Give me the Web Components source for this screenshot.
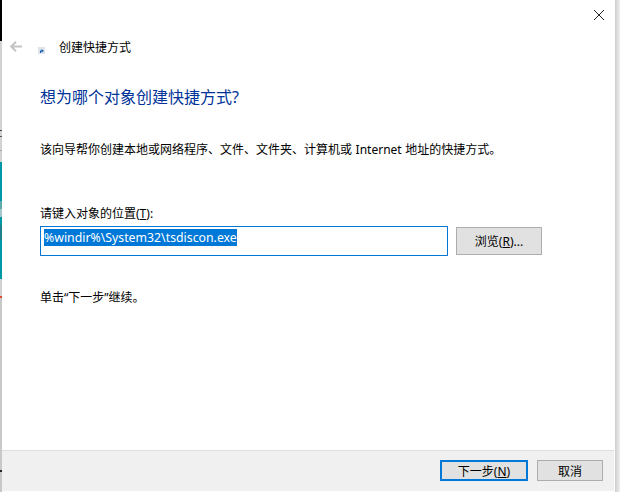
<!DOCTYPE html>
<html>
<head>
<meta charset="utf-8">
<style>
html, body { margin: 0; height: 100%; background: #fff; overflow: hidden; }
</style>
</head>
<body>
<wizard-window>
    <wizard-header slot="header">创建快捷方式</wizard-header>
    <wizard-page>
        <span slot="title">想为哪个对象创建快捷方式?</span>
        <span slot="intro">该向导帮你创建本地或网络程序、文件、文件夹、计算机或 Internet 地址的快捷方式。</span>
        <location-field></location-field>
        <span slot="hint">单击“下一步”继续。</span>
    </wizard-page>
    <wizard-button slot="footer" primary style="width:88px"><span>下一步(<u>N</u>)</span></wizard-button>
    <wizard-button slot="footer" style="width:66px"><span>取消</span></wizard-button>
</wizard-window>
<script>
class BaseElement extends HTMLElement {
    constructor() {
        super();
        this.attachShadow({ mode: 'open' });
    }

    connectedCallback() {
        this.shadowRoot.innerHTML = `<style>${this.constructor.styles}</style>${this.render()}`;
    }
}

class WizardWindow extends BaseElement {
    static get styles() {
        return `
        :host {
            display: grid;
            grid-template-columns: 2px 1fr 6px;
            height: 492px;
            font-family: "Noto Sans", "Noto Sans CJK SC", sans-serif;
            font-size: 12px;
            color: #000;
        }
        .edge {
            background: linear-gradient(to bottom,
                #000 0, #000 41px, #d2d2d2 41px, #d2d2d2 130px,
                #444 130px, #444 131px, #d2d2d2 131px, #d2d2d2 136px,
                #555 136px, #555 137px, #d2d2d2 137px, #d2d2d2 150px,
                #aaa 150px, #aaa 151px, #d2d2d2 151px, #d2d2d2 162px,
                #0097a7 162px, #0097a7 201px, #5fa8ac 201px, #5fa8ac 209px,
                #a4c8ca 209px, #a4c8ca 217px, #0097a7 217px, #0097a7 225px,
                #1f7f8c 225px, #1f7f8c 240px, #0097a7 240px, #0097a7 279px,
                #d2d2d2 279px, #d2d2d2 296px, #e5482d 296px, #e5482d 298px,
                #c8c8c8 298px, #c8c8c8 470px, #222 470px, #222 472px, #c8c8c8 472px);
        }
        .side { background: linear-gradient(to right, #fff 0, #fff 1px, #cdcdcd 1px, #efefef 6px); }
        main { display: flex; flex-direction: column; min-width: 0; }
        .body { flex: 1; display: flex; flex-direction: column; }
        footer {
            display: flex;
            justify-content: flex-end;
            gap: 9px;
            height: 41px;
            margin-bottom: 1px;
            box-sizing: border-box;
            padding: 9px 11px 0 0;
            background: #f0f0f0;
            border-top: 1px solid #dfdfdf;
        }
        `;
    }

    render() {
        return `
        <div class="edge"></div>
        <main>
            <div class="body"><slot name="header"></slot><slot></slot></div>
            <footer><slot name="footer"></slot></footer>
        </main>
        <div class="side"></div>`;
    }
}

class WizardHeader extends BaseElement {
    static get styles() {
        return `
        :host { display: block; }
        .bar { display: flex; justify-content: flex-end; height: 28px; box-sizing: border-box; padding: 9px 9px 0 0; }
        .row { display: flex; align-items: center; height: 38px; padding-left: 8px; }
        svg { display: block; flex: none; }
        .back { margin: -2px 16px 0 0; }
        .icon { margin: 6px 14px 0 0; }
        `;
    }

    render() {
        return `
        <div class="bar">
            <svg width="12" height="12" viewBox="0 0 12 12"><path d="M1 1l10 10M11 1 1 11" fill="none" stroke="#222" stroke-width="1"/></svg>
        </div>
        <div class="row">
            <svg class="back" width="12" height="11" viewBox="0 0 12 11"><path d="M6 .8 1.2 5.5 6 10.2M1.5 5.5H12" fill="none" stroke="#c4c4c4" stroke-width="2"/></svg>
            <svg class="icon" width="7" height="7" viewBox="0 0 7 7"><rect width="7" height="7" fill="#dfe3ea"/><path d="M2 6V3.5h1.5V2L6 4 3.5 5.5V4.5H3V6z" fill="#1b5fb4"/></svg>
            <slot></slot>
        </div>`;
    }
}

class WizardPage extends BaseElement {
    static get styles() {
        return `
        :host { display: flex; flex-direction: column; padding-left: 38px; }
        .title { margin-top: 18px; height: 26px; line-height: 26px; font-size: 16px; color: #003399; }
        .intro { margin-top: 30px; height: 20px; line-height: 20px; word-spacing: .5px; }
        .hint { margin-top: 32px; height: 20px; line-height: 20px; }
        `;
    }

    render() {
        return `
        <div class="title"><slot name="title"></slot></div>
        <div class="intro"><slot name="intro"></slot></div>
        <slot></slot>
        <div class="hint"><slot name="hint"></slot></div>`;
    }
}

class LocationField extends BaseElement {
    static get styles() {
        return `
        :host { display: block; margin-top: 44px; }
        label { display: block; height: 20px; line-height: 20px; }
        .row { display: flex; align-items: center; gap: 8px; margin-top: 2px; }
        .input {
            box-sizing: border-box;
            width: 408px;
            height: 30px;
            border: 1px solid #0078d7;
            padding: 2px 3px 0;
            display: flex;
            align-items: flex-start;
        }
        .sel {
            background: #0078d7;
            color: #fff;
            font-family: "Noto Sans", sans-serif;
            font-size: 12.3px;
            line-height: 17px;
            height: 17px;
        }
        `;
    }

    render() {
        return `
        <label>请键入对象的位置(<u>T</u>):</label>
        <div class="row">
            <div class="input"><span class="sel">%windir%\\System32\\tsdiscon.exe</span></div>
            <wizard-button style="width:86px;height:28px"><span>浏览(<u>R</u>)...</span></wizard-button>
        </div>`;
    }
}

class WizardButton extends BaseElement {
    static get styles() {
        return `
        :host {
            display: flex;
            align-items: center;
            justify-content: center;
            box-sizing: border-box;
            height: 21px;
            background: #e1e1e1;
            border: 1px solid #adadad;
            flex: none;
        }
        :host([primary]) { border: 2px solid #0078d7; }
        `;
    }

    render() {
        return `<slot></slot>`;
    }
}

customElements.define('wizard-window', WizardWindow);
customElements.define('wizard-header', WizardHeader);
customElements.define('wizard-page', WizardPage);
customElements.define('location-field', LocationField);
customElements.define('wizard-button', WizardButton);
</script>
</body>
</html>
